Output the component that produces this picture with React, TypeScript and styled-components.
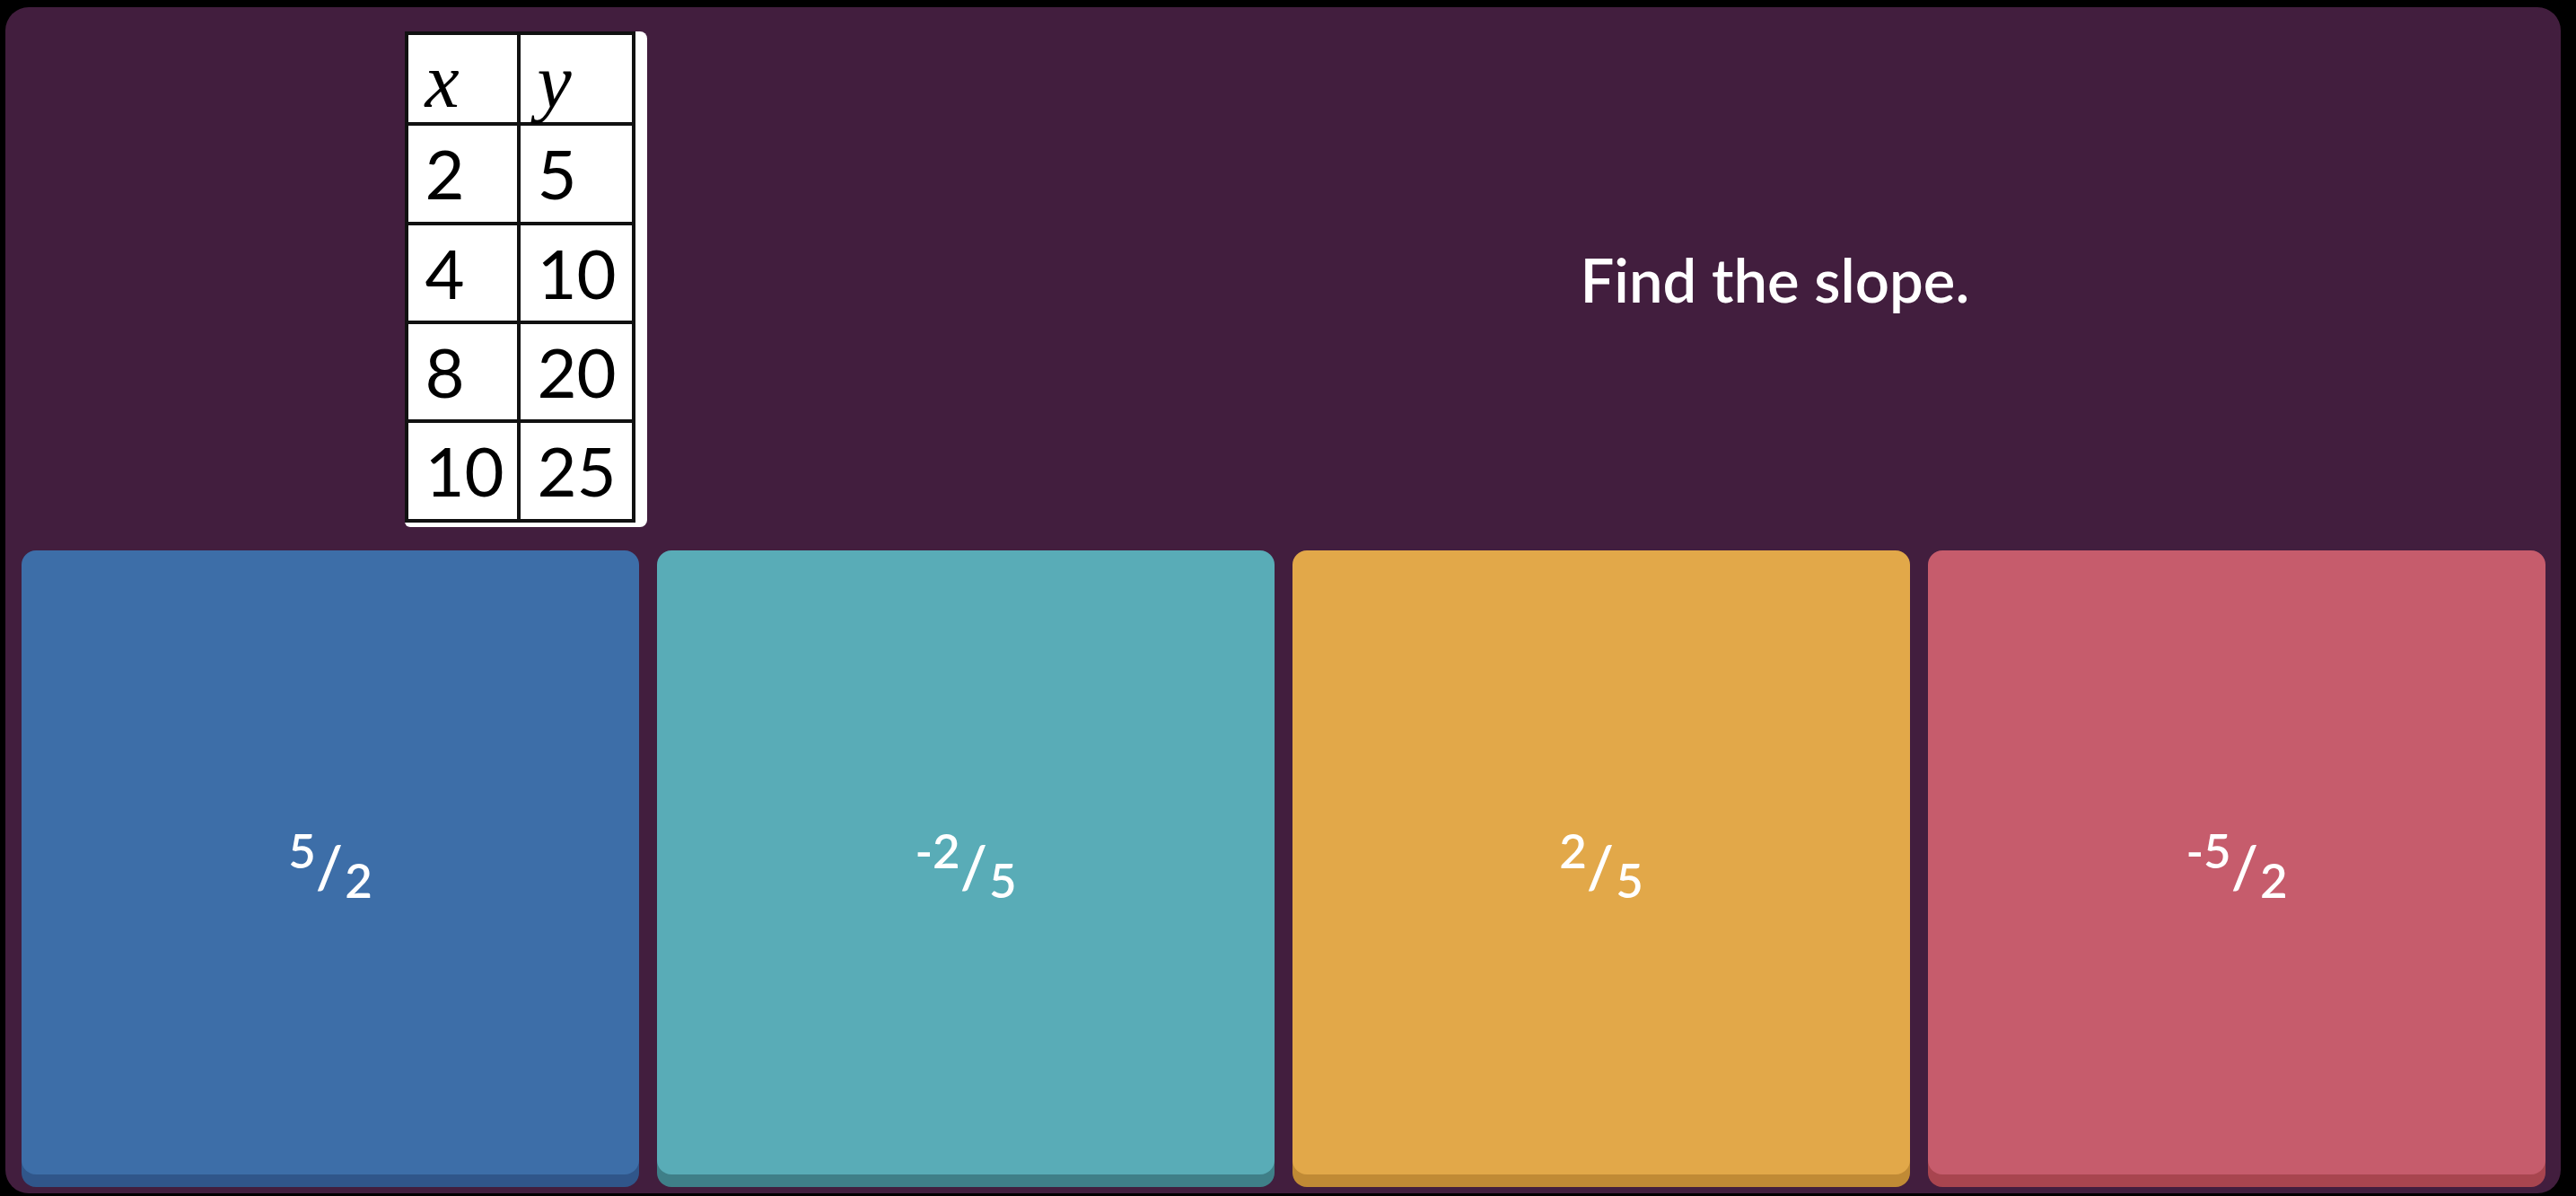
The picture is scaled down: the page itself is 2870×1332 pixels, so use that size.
import * as React from "react"
import styled, { createGlobalStyle } from "styled-components"

const GlobalStyle = createGlobalStyle`
  html, body {
    margin: 0;
    padding: 0;
    background: #000;
  }
  body {
    width: 2870px;
    height: 1332px;
    overflow: hidden;
    font-family: "Lato", "Noto Sans", sans-serif;
  }
`

const Panel = styled.main`
  margin: 8px 17px 0 6px;
  height: 1321px;
  box-sizing: border-box;
  background: #421e3e;
  border-radius: 26px;
  padding: 0 17px 21px 18px;
  display: flex;
  flex-direction: column;
`

const QuestionArea = styled.section`
  height: 605px;
  flex: none;
  display: grid;
  grid-template-columns: 2fr 3fr;
  align-items: center;
`

const MediaCol = styled.div`
  display: flex;
  justify-content: center;
  align-items: center;
`

const QuestionText = styled.p`
  margin: 0;
  padding-right: 30px;
  text-align: center;
  color: #fff;
  font-family: "Lato", "Noto Sans", sans-serif;
  font-size: 67px;
  font-weight: 600;
`

const TableImage = styled.div`
  width: 270px;
  height: 552px;
  box-sizing: border-box;
  background: #fff;
  border-radius: 0 8px 8px 6px;
  padding: 0 13px 5px 0;
`

const ValueTable = styled.table`
  width: 100%;
  height: 100%;
  border-collapse: collapse;
  border: 4px solid #111;
  table-layout: fixed;
`

const Cell = styled.td<{ $head?: boolean; $h: number }>`
  height: ${(p) => p.$h}px;
  border: 4px solid #111;
  padding: ${(p) => (p.$head ? "6px 0 0 18px" : "0 0 0 18px")};
  vertical-align: middle;
  color: #000;
  line-height: 0.9;
  font-family: ${(p) =>
    p.$head ? `"Liberation Serif", "DejaVu Serif", serif` : `"Lato", "Open Sans", sans-serif`};
  font-style: ${(p) => (p.$head ? "italic" : "normal")};
  font-size: ${(p) => (p.$head ? "86px" : "76px")};
`

const Options = styled.section`
  flex: none;
  height: 695px;
  display: grid;
  grid-template-columns: repeat(4, 1fr);
  gap: 20px;
`

const OptionCard = styled.button<{ $bg: string; $shade: string }>`
  border: none;
  margin: 0;
  padding: 0;
  height: 100%;
  border-radius: 16px;
  background: ${(p) => p.$bg};
  box-shadow: 0 14px 0 ${(p) => p.$shade};
  display: flex;
  align-items: center;
  justify-content: center;
  color: #fff;
  font-family: "Lato", "Noto Sans", sans-serif;
  font-size: 66px;
  font-weight: 600;
  cursor: pointer;
`

const Fraction = styled.span`
  display: inline-block;
  line-height: 1;
  padding-top: 6px;
`

const Num = styled.sup`
  font-size: 0.8em;
  vertical-align: 0.42em;
  line-height: 0;
`

const Den = styled.sub`
  font-size: 0.8em;
  vertical-align: -0.22em;
  line-height: 0;
  margin-left: 2px;
`

const rows = [
  ["2", "5"],
  ["4", "10"],
  ["8", "20"],
  ["10", "25"],
]

const options = [
  { num: "5", den: "2", bg: "#3d6ea8", shade: "#30568a" },
  { num: "-2", den: "5", bg: "#59acb7", shade: "#3f7f88" },
  { num: "2", den: "5", bg: "#e2a849", shade: "#c08a35" },
  { num: "-5", den: "2", bg: "#c65c6c", shade: "#a8454f" },
]

export default function App() {
  return (
    <>
      <GlobalStyle />
      <Panel>
        <QuestionArea>
          <MediaCol>
            <TableImage>
              <ValueTable>
                <colgroup>
                  <col style={{ width: "125px" }} />
                  <col />
                </colgroup>
                <tbody>
                  <tr>
                    <Cell $head $h={86}>x</Cell>
                    <Cell $head $h={86}>y</Cell>
                  </tr>
                  {rows.map(([x, y]) => (
                    <tr key={x}>
                      <Cell $h={100}>{x}</Cell>
                      <Cell $h={100}>{y}</Cell>
                    </tr>
                  ))}
                </tbody>
              </ValueTable>
            </TableImage>
          </MediaCol>
          <QuestionText>Find the slope.</QuestionText>
        </QuestionArea>
        <Options>
          {options.map((o) => (
            <OptionCard key={o.bg} $bg={o.bg} $shade={o.shade}>
              <Fraction>
                <Num>{o.num}</Num>/<Den>{o.den}</Den>
              </Fraction>
            </OptionCard>
          ))}
        </Options>
      </Panel>
    </>
  )
}
